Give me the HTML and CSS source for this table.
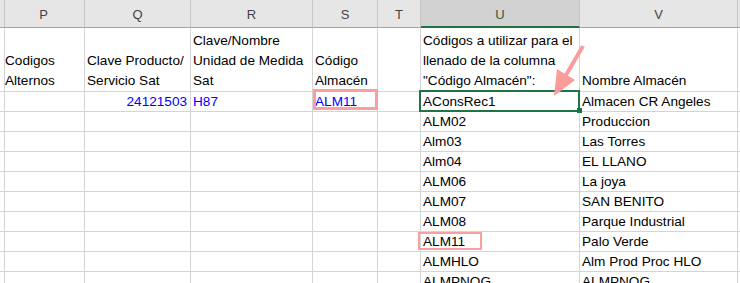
FILE: index.html
```html
<!DOCTYPE html>
<html lang="es">
<head>
    <meta charset="UTF-8">
    <meta name="viewport" content="width=device-width, initial-scale=1.0">
    <title>Códigos de Almacén</title>
    <link rel="stylesheet" href="styles.css">
</head>
<body>
    <div class="sheet">
        <!-- column letters -->
        <div class="row col-heads">
            <div class="cell"></div>
            <div class="cell">P</div>
            <div class="cell">Q</div>
            <div class="cell">R</div>
            <div class="cell">S</div>
            <div class="cell">T</div>
            <div class="cell active">U</div>
            <div class="cell">V</div>
            <div class="cell"></div>
        </div>

        <!-- titles -->
        <div class="row titles">
            <div class="cell"></div>
            <div class="cell"><div>Codigos<br>Alternos</div></div>
            <div class="cell"><div>Clave Producto/<br>Servicio Sat</div></div>
            <div class="cell"><div>Clave/Nombre<br>Unidad de Medida<br>Sat</div></div>
            <div class="cell"><div>Código<br>Almacén</div></div>
            <div class="cell"></div>
            <div class="cell"><div>Códigos a utilizar para el<br>llenado de la columna<br>"Código Almacén":</div></div>
            <div class="cell"><div>Nombre Almacén</div></div>
            <div class="cell"></div>
        </div>

        <div class="row">
            <div class="cell"></div>
            <div class="cell"></div>
            <div class="cell num">24121503</div>
            <div class="cell link">H87</div>
            <div class="cell link"><span class="mark wide"></span>ALM11</div>
            <div class="cell"></div>
            <div class="cell selected">AConsRec1</div>
            <div class="cell">Almacen CR Angeles</div>
            <div class="cell"></div>
        </div>
        <div class="row">
            <div class="cell"></div><div class="cell"></div><div class="cell"></div><div class="cell"></div><div class="cell"></div><div class="cell"></div>
            <div class="cell">ALM02</div>
            <div class="cell">Produccion</div>
            <div class="cell"></div>
        </div>
        <div class="row">
            <div class="cell"></div><div class="cell"></div><div class="cell"></div><div class="cell"></div><div class="cell"></div><div class="cell"></div>
            <div class="cell">Alm03</div>
            <div class="cell">Las Torres</div>
            <div class="cell"></div>
        </div>
        <div class="row">
            <div class="cell"></div><div class="cell"></div><div class="cell"></div><div class="cell"></div><div class="cell"></div><div class="cell"></div>
            <div class="cell">Alm04</div>
            <div class="cell">EL LLANO</div>
            <div class="cell"></div>
        </div>
        <div class="row">
            <div class="cell"></div><div class="cell"></div><div class="cell"></div><div class="cell"></div><div class="cell"></div><div class="cell"></div>
            <div class="cell">ALM06</div>
            <div class="cell">La joya</div>
            <div class="cell"></div>
        </div>
        <div class="row">
            <div class="cell"></div><div class="cell"></div><div class="cell"></div><div class="cell"></div><div class="cell"></div><div class="cell"></div>
            <div class="cell">ALM07</div>
            <div class="cell">SAN BENITO</div>
            <div class="cell"></div>
        </div>
        <div class="row">
            <div class="cell"></div><div class="cell"></div><div class="cell"></div><div class="cell"></div><div class="cell"></div><div class="cell"></div>
            <div class="cell">ALM08</div>
            <div class="cell">Parque Industrial</div>
            <div class="cell"></div>
        </div>
        <div class="row">
            <div class="cell"></div><div class="cell"></div><div class="cell"></div><div class="cell"></div><div class="cell"></div><div class="cell"></div>
            <div class="cell"><span class="mark small"></span>ALM11</div>
            <div class="cell">Palo Verde</div>
            <div class="cell"></div>
        </div>
        <div class="row">
            <div class="cell"></div><div class="cell"></div><div class="cell"></div><div class="cell"></div><div class="cell"></div><div class="cell"></div>
            <div class="cell">ALMHLO</div>
            <div class="cell">Alm Prod Proc HLO</div>
            <div class="cell"></div>
        </div>
        <div class="row">
            <div class="cell"></div><div class="cell"></div><div class="cell"></div><div class="cell"></div><div class="cell"></div><div class="cell"></div>
            <div class="cell">ALMPNOG</div>
            <div class="cell">ALMPNOG</div>
            <div class="cell"></div>
        </div>

        <!-- pointer to the selected code -->
        <svg class="arrow" width="740" height="283" viewBox="0 0 740 283">
            <line x1="583" y1="46" x2="566" y2="75" stroke="#fb9c9c" stroke-width="4"/>
            <polygon points="554,96 575,80 557,69" fill="#fb9c9c"/>
        </svg>
    </div>
</body>
</html>
```

FILE: styles.css
```css
body {
    margin: 0;
    background-color: #fff;
    font-family: "Liberation Sans", Arial, sans-serif;
    font-size: 13.6px;
    color: #000;
}
.sheet {
    position: relative;
    width: 740px;
    height: 283px;
    overflow: hidden;
}
.row {
    display: grid;
    grid-template-columns: 3px 82px 106px 122px 65px 43px 159px 158px 1fr;
    height: 20px;
}
.cell {
    position: relative;
    box-sizing: border-box;
    border-right: 1px solid #d4d4d4;
    border-bottom: 1px solid #d4d4d4;
    padding: 0 2px;
    line-height: 19px;
    white-space: nowrap;
}
.cell:last-child {
    border-right: none;
}
.col-heads {
    height: 28px;
    background-color: #e6e6e6;
}
.col-heads .cell {
    border-right-color: #c6c6c6;
    border-bottom-color: #a3a3a3;
    padding-top: 4px;
    text-align: center;
    font-size: 13px;
    line-height: 22px;
    color: #444;
}
.col-heads .active {
    background-color: #d2d2d2;
    border-bottom: 2px solid #217346;
    color: #1e5e3a;
}
.titles {
    height: 64px;
}
.titles .cell {
    display: flex;
    align-items: flex-end;
    line-height: 20px;
}
.num {
    text-align: right;
    padding-right: 3px;
    color: #0000ff;
}
.link {
    color: #0000ff;
}
.selected::after {
    content: "";
    position: absolute;
    left: -2px;
    top: -2px;
    right: -1px;
    bottom: -1px;
    border: 2px solid #217346;
    z-index: 2;
}
.selected::before {
    content: "";
    position: absolute;
    left: 156px;
    top: 16px;
    width: 5px;
    height: 5px;
    background-color: #217346;
    z-index: 3;
}
.mark {
    position: absolute;
    box-sizing: border-box;
    border: 3px solid #fa9e9e;
    z-index: 2;
}
.mark.wide {
    left: 0;
    top: -3px;
    right: -1px;
    bottom: 1px;
}
.mark.small {
    left: -3px;
    top: 0;
    width: 64px;
    height: 18px;
    border-width: 2px;
}
.arrow {
    position: absolute;
    top: 0;
    left: 0;
    pointer-events: none;
    z-index: 4;
}
```
